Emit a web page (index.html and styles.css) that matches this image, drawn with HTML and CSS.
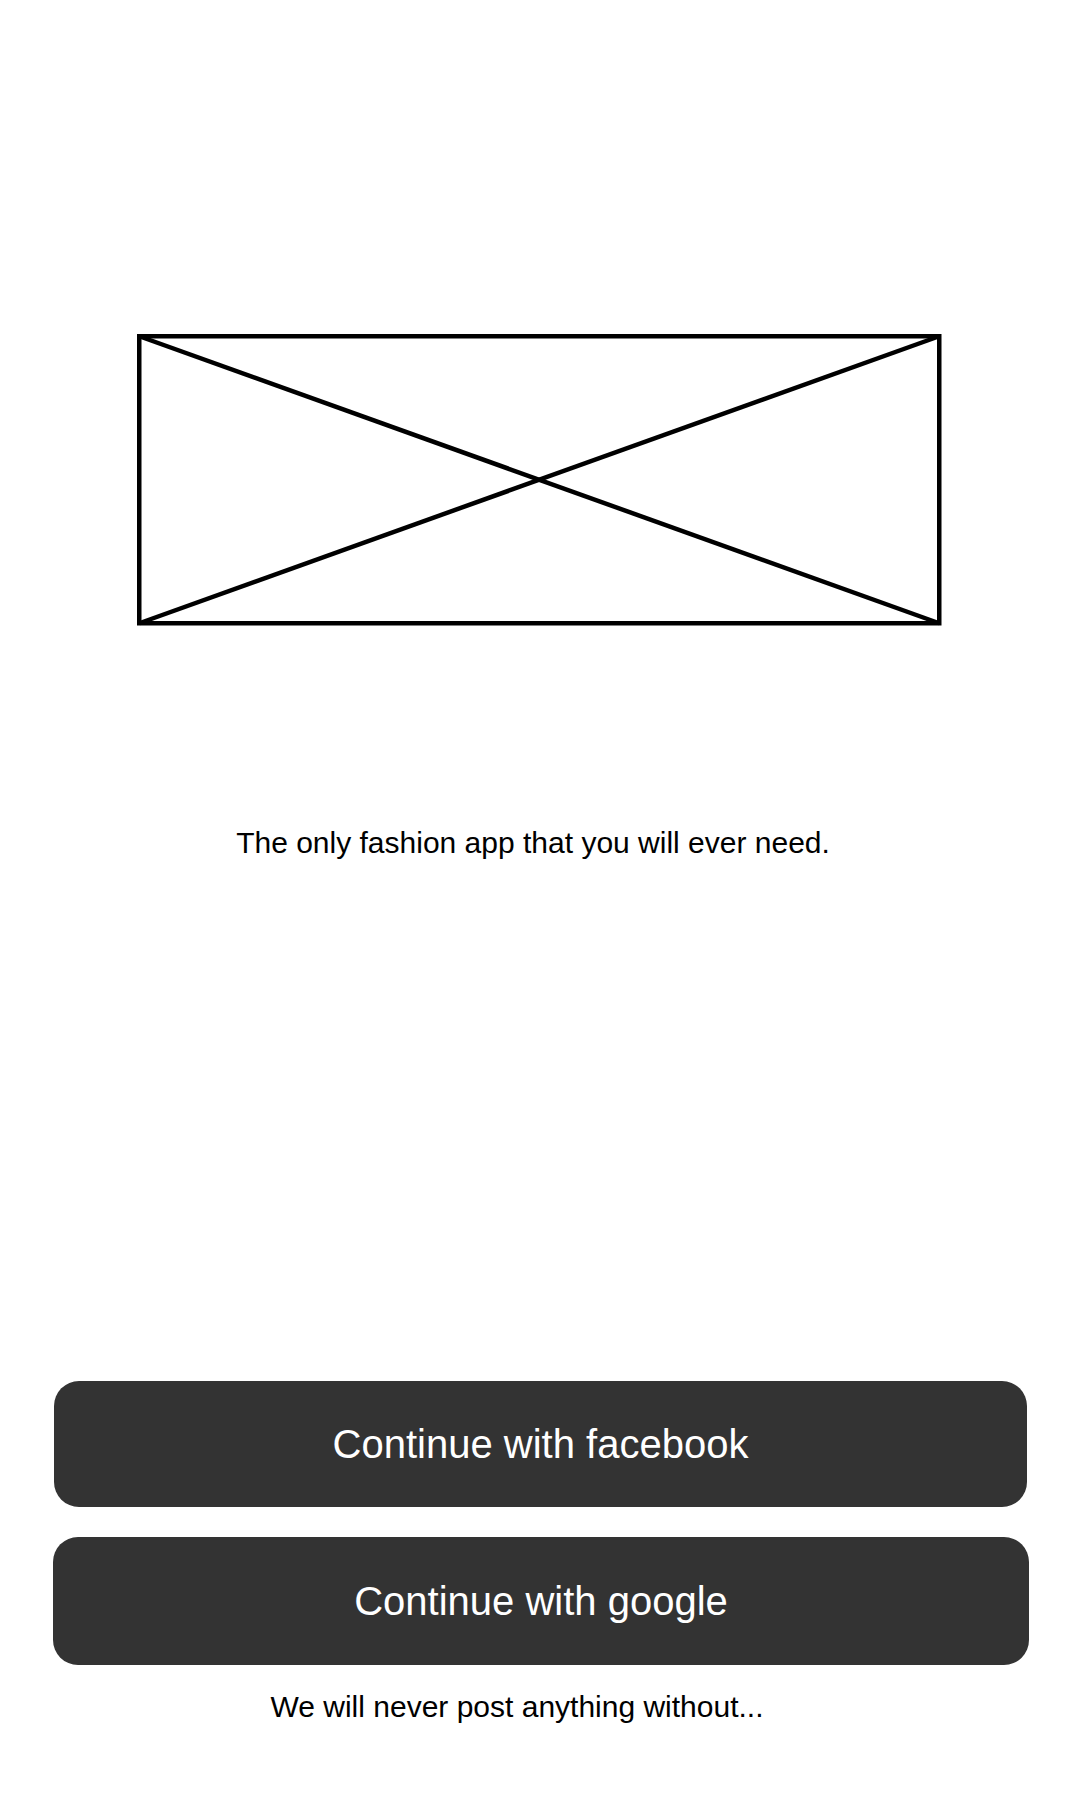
FILE: index.html
```html
<!DOCTYPE html>
<html lang="en">
<head>
<meta charset="utf-8">
<title>Welcome</title>
<link rel="stylesheet" href="styles.css">
</head>
<body>
<main class="screen">
  <div class="hero">
    <svg class="placeholder" width="805" height="292" viewBox="0 0 805 292" aria-hidden="true">
      <rect x="2.25" y="2.25" width="800" height="287" fill="none" stroke="#000" stroke-width="4.5"/>
      <line x1="2.25" y1="2.25" x2="802.25" y2="289.25" stroke="#000" stroke-width="4.5"/>
      <line x1="802.25" y1="2.25" x2="2.25" y2="289.25" stroke="#000" stroke-width="4.5"/>
    </svg>
  </div>
  <p class="tagline">The only fashion app that you will ever need.</p>
  <div class="spacer"></div>
  <div class="actions">
    <button class="btn btn-facebook">Continue with facebook</button>
    <button class="btn btn-google">Continue with google</button>
  </div>
  <p class="note">We will never post anything without...</p>
</main>
</body>
</html>
```
FILE: styles.css
```css
html, body {
  margin: 0;
  padding: 0;
  background: #fff;
}
body {
  font-family: "Liberation Sans", Arial, sans-serif;
  color: #000;
  width: 1080px;
  height: 1800px;
}
.screen {
  display: flex;
  flex-direction: column;
  height: 1800px;
}
.hero {
  padding-top: 334px;
  padding-left: 137px;
  display: flex;
}
.placeholder {
  display: block;
}
.tagline {
  margin: 200px 0 0;
  padding-right: 14px;
  font-size: 30px;
  line-height: 34px;
  text-align: center;
}
.spacer {
  height: 521px;
}
.actions {
  display: flex;
  flex-direction: column;
  gap: 30px;
}
.btn {
  display: block;
  border: none;
  background: #333333;
  color: #fff;
  font-family: "Liberation Sans", Arial, sans-serif;
  font-size: 40px;
  border-radius: 25px;
  padding: 0;
  cursor: pointer;
}
.btn-facebook {
  margin: 0 53px 0 54px;
  height: 126px;
}
.btn-google {
  margin: 0 51px 0 53px;
  height: 128px;
}
.note {
  margin: 25px 0 0;
  padding-right: 46px;
  font-size: 30px;
  line-height: 34px;
  text-align: center;
}
```
